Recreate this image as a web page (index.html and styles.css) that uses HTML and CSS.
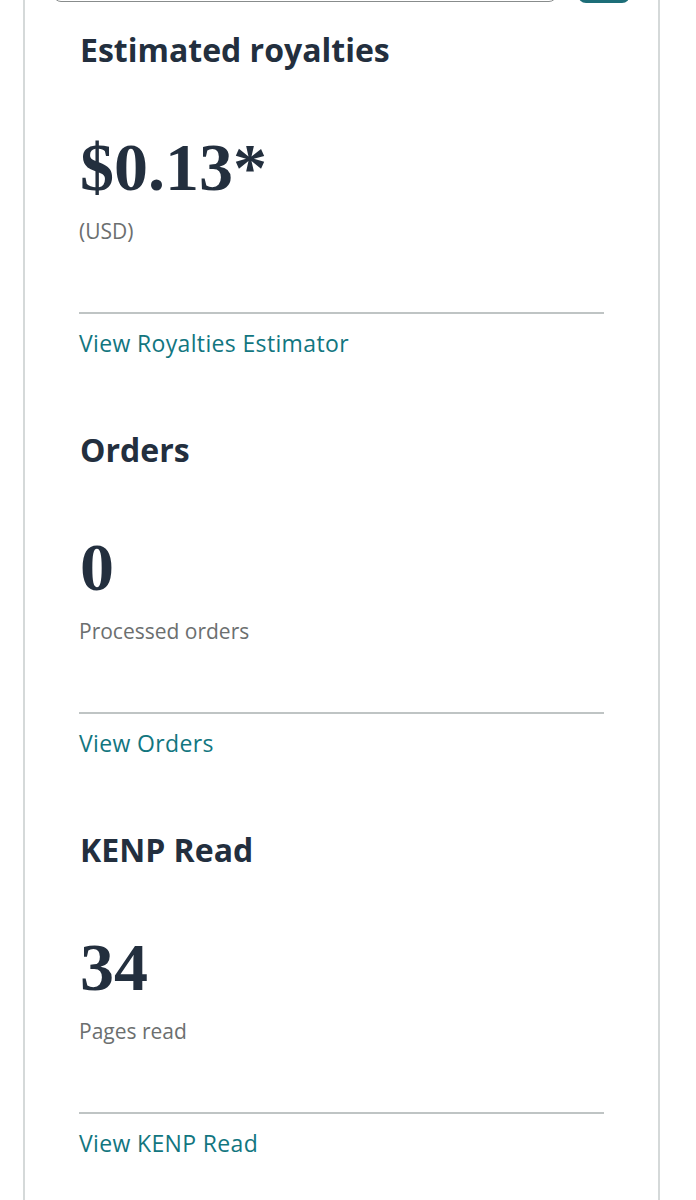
FILE: index.html
```html
<!DOCTYPE html>
<html lang="en">
<head>
<meta charset="utf-8">
<title>Dashboard</title>
<link rel="stylesheet" href="styles.css">
</head>
<body>
<div class="page">
  <div class="card">
    <div class="search-row">
      <div class="search-input"></div>
      <div class="search-btn"></div>
    </div>

    <section class="metric">
      <h2 class="metric-title">Estimated royalties</h2>
      <div class="metric-value">$0.13*</div>
      <div class="metric-label">(USD)</div>
      <div class="metric-divider"></div>
      <a class="metric-link" href="#">View Royalties Estimator</a>
    </section>

    <section class="metric">
      <h2 class="metric-title">Orders</h2>
      <div class="metric-value">0</div>
      <div class="metric-label">Processed orders</div>
      <div class="metric-divider"></div>
      <a class="metric-link" href="#">View Orders</a>
    </section>

    <section class="metric">
      <h2 class="metric-title">KENP Read</h2>
      <div class="metric-value">34</div>
      <div class="metric-label">Pages read</div>
      <div class="metric-divider"></div>
      <a class="metric-link" href="#">View KENP Read</a>
    </section>
  </div>
</div>
</body>
</html>
```

FILE: styles.css
```css
html, body {
  margin: 0;
  padding: 0;
  background: #ffffff;
}

body {
  font-family: "Open Sans", "Noto Sans", sans-serif;
  color: #232f3e;
  overflow: hidden;
}

.page {
  margin-top: -38px;
  padding-left: 23px;
  width: 637px;
}

.card {
  border-left: 2px solid #d5d9d9;
  border-right: 2px solid #d5d9d9;
  min-height: 1300px;
  box-sizing: border-box;
}

.search-row {
  display: flex;
  gap: 21px;
  padding-left: 28px;
  height: 40px;
}

.search-input {
  width: 504px;
  height: 40px;
  box-sizing: border-box;
  border: 1px solid #888c8c;
  border-radius: 8px;
}

.search-btn {
  width: 52px;
  height: 41px;
  background: #1d6e78;
  border-radius: 8px;
}

.metric {
  display: flex;
  flex-direction: column;
  align-items: flex-start;
  padding: 28px 54px 44px 55px;
}

.metric-title {
  margin: 0;
  font-size: 32px;
  line-height: 40px;
  font-weight: 700;
  letter-spacing: 0;
  color: #232f3e;
}

.metric-value {
  margin-top: 63px;
  font-family: "Liberation Serif", "Times New Roman", serif;
  font-weight: 700;
  font-size: 68px;
  line-height: 68px;
  color: #232f3e;
}

.metric-label {
  margin-top: 16px;
  margin-left: -1px;
  font-size: 21px;
  line-height: 28px;
  color: #6c6f6f;
}

.metric-divider {
  align-self: stretch;
  margin-top: 67px;
  margin-left: -1px;
  height: 2px;
  background: #bfc4c4;
}

.metric-link {
  margin-top: 14px;
  margin-left: -1px;
  font-size: 23px;
  line-height: 30px;
  letter-spacing: 0.35px;
  color: #12767f;
  text-decoration: none;
}
```
